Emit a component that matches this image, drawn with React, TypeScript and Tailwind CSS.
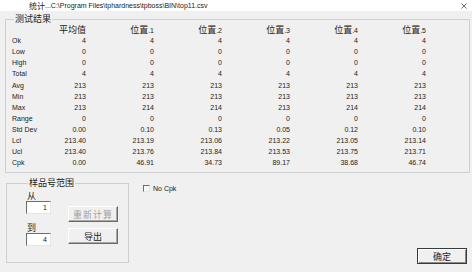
import React from "react";

// 统计结果表格数据
const columns = ["平均值", "位置.1", "位置.2", "位置.3", "位置.4", "位置.5"];

const rows: { label: string; values: string[] }[] = [
  { label: "Ok", values: ["4", "4", "4", "4", "4", "4"] },
  { label: "Low", values: ["0", "0", "0", "0", "0", "0"] },
  { label: "High", values: ["0", "0", "0", "0", "0", "0"] },
  { label: "Total", values: ["4", "4", "4", "4", "4", "4"] },
  { label: "Avg", values: ["213", "213", "213", "213", "213", "213"] },
  { label: "Min", values: ["213", "213", "213", "213", "213", "213"] },
  { label: "Max", values: ["213", "214", "214", "213", "214", "214"] },
  { label: "Range", values: ["0", "0", "0", "0", "0", "0"] },
  { label: "Std Dev", values: ["0.00", "0.10", "0.13", "0.05", "0.12", "0.10"] },
  { label: "Lcl", values: ["213.40", "213.19", "213.06", "213.22", "213.05", "213.14"] },
  { label: "Ucl", values: ["213.40", "213.76", "213.84", "213.53", "213.75", "213.71"] },
  { label: "Cpk", values: ["0.00", "46.91", "34.73", "89.17", "38.68", "46.74"] },
];

const cjk = "text-[9px] font-['Noto_Sans_CJK_SC',sans-serif]";

// 列标题：汉字大一号，数字小一号
const HeaderCell = ({ text }: { text: string }) => {
  const [name, num] = text.split(".");
  return (
    <div className="flex items-baseline justify-end h-[11.1px] pt-[1px]">
      <span className={cjk}>{name}</span>
      {num && <span className="text-[7px]">.{num}</span>}
    </div>
  );
};

const Win32Button = ({ label, disabled }: { label: string; disabled?: boolean }) => (
  <button
    type="button"
    className={`w-[50px] h-[16px] flex items-center justify-center bg-[#f0f0f0] border border-t-white border-l-white border-r-[#6b6b6b] border-b-[#6b6b6b] shadow-[inset_-1px_-1px_0_#a8a8a8] ${cjk} ${
      disabled ? "text-[#a0a0a0] tracking-[1px]" : "text-[#1a1a1a]"
    }`}
  >
    {label}
  </button>
);

const NumberInput = ({ value }: { value: string }) => (
  <div className="w-[25px] h-[13px] bg-white border border-t-[#6d6d6d] border-l-[#6d6d6d] border-r-[#e6e6e6] border-b-[#e6e6e6] flex items-center justify-end pr-[3px] text-[7px]">
    {value}
  </div>
);

export default function App() {
  return (
    <div className="w-[472px] h-[272px] bg-[#f0f0f0] flex flex-col overflow-hidden text-[#222] text-[7px] font-['Liberation_Sans','Noto_Sans_CJK_SC',sans-serif] leading-none">
      {/* 标题栏 */}
      <div className="h-[11px] bg-white flex items-center pl-[29px] pr-[5px]">
        <span className="text-[8px] font-['Noto_Sans_CJK_SC',sans-serif]">统计</span>
        <span>...C:\Program Files\tphardness\tpboss\BIN\top11.csv</span>
        <svg className="ml-auto" width="6" height="6" viewBox="0 0 6 6" aria-hidden="true">
          <path d="M0.5 0.5L5.5 5.5M5.5 0.5L0.5 5.5" stroke="#444" strokeWidth="0.8" />
        </svg>
      </div>

      {/* 测试结果 */}
      <fieldset className="mt-[2px] ml-[5px] w-[465px] h-[160px] border border-[#cfcfcf] px-[6px]">
        <legend className={`ml-[2px] px-[1px] leading-[12px] ${cjk}`}>测试结果</legend>
        <div className="grid grid-cols-[20px_54px_68px_68px_68px_68px_68px] -mt-[1px]">
          <div />
          {columns.map((c) => (
            <HeaderCell key={c} text={c} />
          ))}
          {rows.map((r) => (
            <React.Fragment key={r.label}>
              <div className="h-[11.1px] flex items-center whitespace-nowrap">{r.label}</div>
              {r.values.map((v, i) => (
                <div key={i} className="h-[11.1px] flex items-center justify-end">
                  {v}
                </div>
              ))}
            </React.Fragment>
          ))}
        </div>
      </fieldset>

      {/* 下部区域 */}
      <div className="flex-1 flex mt-[4px] pb-[8px]">
        <fieldset className="ml-[6px] w-[123px] h-[86px] border border-[#cfcfcf] pl-[19px]">
          <legend className={`ml-[2px] px-[1px] leading-[12px] ${cjk}`}>样品号范围</legend>
          <div className="flex">
            <div className="flex flex-col">
              <div className={`h-[12px] pl-[1px] flex items-center ${cjk}`}>从</div>
              <NumberInput value="1" />
              <div className={`mt-[8px] h-[11px] pl-[1px] flex items-center ${cjk}`}>到</div>
              <NumberInput value="4" />
            </div>
            <div className="ml-[17px] mt-[17px] flex flex-col gap-[6px]">
              <Win32Button label="重新计算" disabled />
              <Win32Button label="导出" />
            </div>
          </div>
        </fieldset>

        <label className="ml-[14px] mt-[7px] h-[8px] flex items-center gap-[3px] self-start">
          <span className="w-[7px] h-[7px] bg-[#f7f7f7] border border-t-[#6d6d6d] border-l-[#6d6d6d] border-r-[#e6e6e6] border-b-[#e6e6e6]" />
          <span>No Cpk</span>
        </label>

        <div className="flex-1 flex items-end justify-end pr-[5px]">
          <button
            type="button"
            className={`w-[50px] h-[16px] flex items-center justify-center bg-[#f0f0f0] border border-[#3a3a3a] shadow-[inset_1px_1px_0_#ffffff,inset_-1px_-1px_0_#8a8a8a] ${cjk}`}
          >
            确定
          </button>
        </div>
      </div>
    </div>
  );
}
